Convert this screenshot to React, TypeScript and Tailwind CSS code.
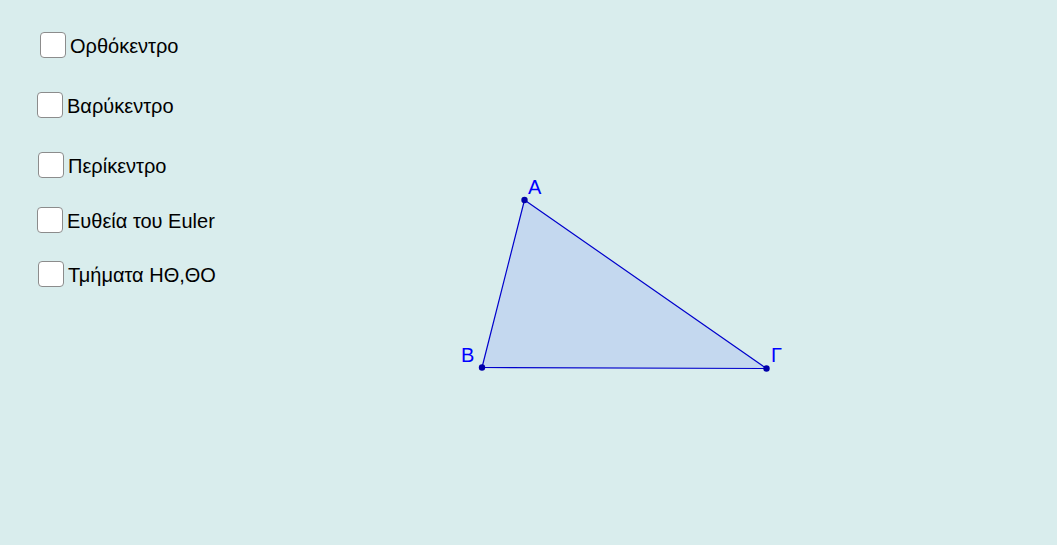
import React from "react";

const items = [
  { label: "Ορθόκεντρο", cls: "ml-[40px] mt-[32px]" },
  { label: "Βαρύκεντρο", cls: "ml-[37px] mt-[34px]" },
  { label: "Περίκεντρο", cls: "ml-[38px] mt-[34px]" },
  { label: "Ευθεία του Euler", cls: "ml-[37px] mt-[29px]" },
  { label: "Τμήματα ΗΘ,ΘΟ", cls: "ml-[38px] mt-[28px]" },
];

export default function App() {
  return (
    <div className="w-[1059px] h-[547px] bg-white">
      <div
        className="relative w-[1057px] h-[545px] bg-[#d9eded] overflow-hidden"
        style={{ fontFamily: '"Liberation Sans", Arial, sans-serif' }}
      >
        <div className="flex flex-col items-start">
          {items.map((it) => (
            <label key={it.label} className={`flex items-center gap-[4px] ${it.cls}`}>
              <span className="w-[26px] h-[26px] rounded-[4px] border-[1.5px] border-[#8c8c8c] bg-white shrink-0" />
              <span className="text-[20px] leading-[22px] text-black translate-y-[1px]">{it.label}</span>
            </label>
          ))}
        </div>
        <svg className="absolute left-0 top-0" width="1057" height="545">
          <polygon
            points="524.5,200 482,367.5 766.5,368.5"
            fill="#c4d8ef"
            stroke="#0000cc"
            strokeWidth="1.2"
          />
          <circle cx="524.5" cy="200" r="3.2" fill="#0000aa" />
          <circle cx="482" cy="367.5" r="3.2" fill="#0000aa" />
          <circle cx="766.5" cy="368.5" r="3.2" fill="#0000aa" />
          <text x="528" y="194" fill="#0000ff" fontSize="20" fontFamily="Liberation Sans, Arial, sans-serif">Α</text>
          <text x="461" y="362" fill="#0000ff" fontSize="20" fontFamily="Liberation Sans, Arial, sans-serif">Β</text>
          <text x="771" y="362" fill="#0000ff" fontSize="20" fontFamily="Liberation Sans, Arial, sans-serif">Γ</text>
        </svg>
      </div>
    </div>
  );
}
